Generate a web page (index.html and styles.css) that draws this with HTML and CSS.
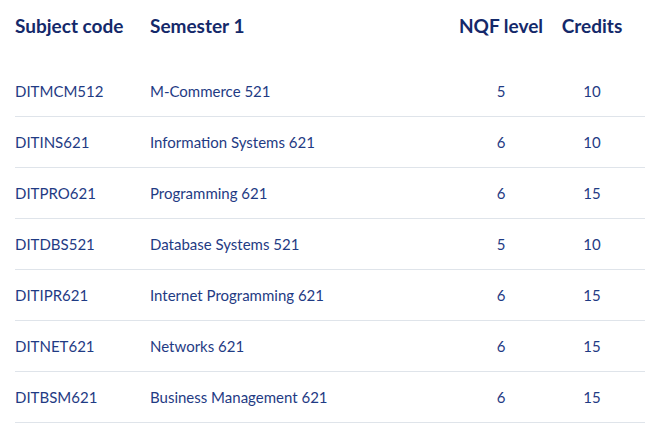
FILE: index.html
```html
<!DOCTYPE html>
<html lang="en">
<head>
<meta charset="utf-8">
<title>Semester 1</title>
<link rel="stylesheet" href="styles.css">
</head>
<body>
<div class="table">
  <div class="row head">
    <div class="cell">Subject code</div>
    <div class="cell">Semester 1</div>
    <div class="cell num">NQF level</div>
    <div class="cell num">Credits</div>
  </div>
  <div class="row"><div class="cell">DITMCM512</div><div class="cell">M-Commerce 521</div><div class="cell num">5</div><div class="cell num">10</div></div>
  <div class="row"><div class="cell">DITINS621</div><div class="cell">Information Systems 621</div><div class="cell num">6</div><div class="cell num">10</div></div>
  <div class="row"><div class="cell">DITPRO621</div><div class="cell">Programming 621</div><div class="cell num">6</div><div class="cell num">15</div></div>
  <div class="row"><div class="cell">DITDBS521</div><div class="cell">Database Systems 521</div><div class="cell num">5</div><div class="cell num">10</div></div>
  <div class="row"><div class="cell">DITIPR621</div><div class="cell">Internet Programming 621</div><div class="cell num">6</div><div class="cell num">15</div></div>
  <div class="row"><div class="cell">DITNET621</div><div class="cell">Networks 621</div><div class="cell num">6</div><div class="cell num">15</div></div>
  <div class="row"><div class="cell">DITBSM621</div><div class="cell">Business Management 621</div><div class="cell num">6</div><div class="cell num">15</div></div>
</div>
</body>
</html>
```

FILE: styles.css
```css
html, body {
  margin: 0;
  padding: 0;
  background: #ffffff;
}
body {
  font-family: "Lato", "Liberation Sans", sans-serif;
}
.table {
  width: 630px;
  margin-left: 15px;
}
.row {
  display: grid;
  grid-template-columns: 135px 301px 100px 82px 12px;
  align-items: center;
  height: 50px;
  border-bottom: 1px solid #dfe4ea;
  font-size: 15px;
  line-height: 20px;
  color: #1f3b84;
}
.row.head {
  height: auto;
  border-bottom: none;
  align-items: start;
  padding: 14px 0 28px;
  font-size: 19px;
  line-height: 24px;
  font-weight: 700;
  color: #14296a;
}
.cell {
  white-space: nowrap;
}
.num {
  text-align: center;
}
```
